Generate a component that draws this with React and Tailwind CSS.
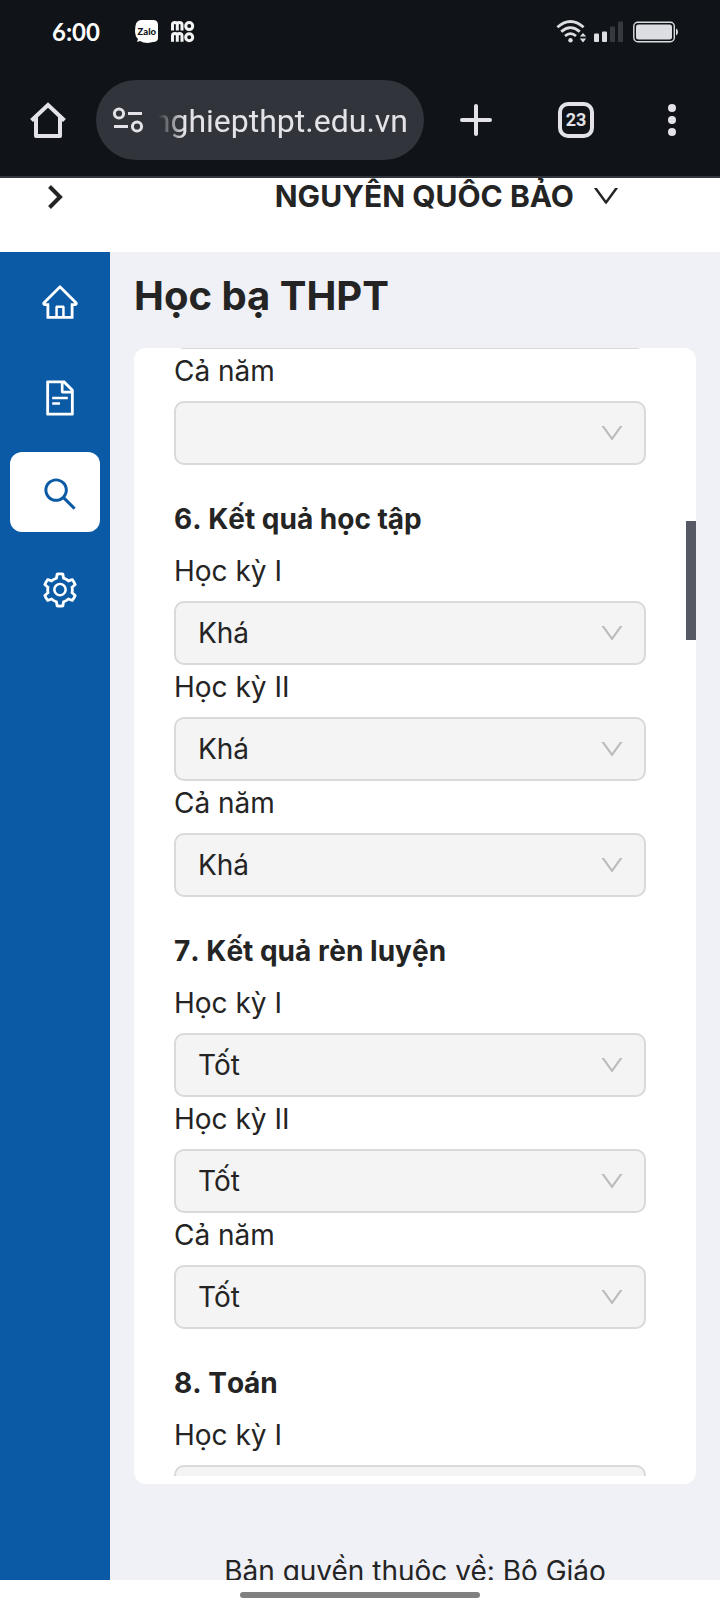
import React from "react";
import {
  AiOutlineDown,
  AiOutlineFileText,
  AiOutlineHome,
  AiOutlineSearch,
  AiOutlineSetting,
} from "react-icons/ai";

const sections = [
  { title: "6. Kết quả học tập", value: "Khá", terms: ["Học kỳ I", "Học kỳ II", "Cả năm"] },
  { title: "7. Kết quả rèn luyện", value: "Tốt", terms: ["Học kỳ I", "Học kỳ II", "Cả năm"] },
  { title: "8. Toán", value: "", terms: ["Học kỳ I"] },
];

const navItems = [
  { label: "Trang chủ", Icon: AiOutlineHome },
  { label: "Phiếu đăng ký", Icon: AiOutlineFileText },
  { label: "Tra cứu", Icon: AiOutlineSearch, active: true },
  { label: "Cài đặt", Icon: AiOutlineSetting },
];

function StatusBar() {
  return (
    <div className="flex h-16 items-center justify-between pl-[52px] pr-10">
      <div className="flex items-center">
        <span className="w-[83px] font-['Lato'] text-2xl leading-8 font-bold text-white">6:00</span>
        <svg className="h-6 w-6" viewBox="0 0 24 24" role="img" aria-label="Zalo">
          <path d="M6 0H18Q23 0 23 5V18Q23 22 18 22L13 23Q8 23 5 21L2 22L3 19Q0 16 0 11Q0 0 6 0Z" fill="#fff" />
          <text x="11.8" y="14.5" textAnchor="middle" fontFamily="Lato, sans-serif" fontWeight="900" fontSize="9.5" fill="#101418">Zalo</text>
        </svg>
        <svg className="ml-3 h-6 w-6" viewBox="0 0 24 24" fill="none" stroke="#f3f3f3" strokeWidth="3" strokeLinecap="butt" role="img" aria-label="MoMo">
          <path d="M1.5 10.6V4.6Q1.5 2.4 3.9 2.4T6.3 4.6V10.6M6.3 4.6Q6.3 2.4 8.6 2.4T11 4.6V10.6" />
          <circle cx="18.2" cy="6.1" r="3.5" />
          <path d="M1.5 21.8V15.8Q1.5 13.6 3.9 13.6T6.3 15.8V21.8M6.3 15.8Q6.3 13.6 8.6 13.6T11 15.8V21.8" />
          <circle cx="18.2" cy="17.3" r="3.5" />
        </svg>
      </div>
      <div className="flex items-center gap-1.5">
        <svg className="h-6 w-8" viewBox="0 0 32 24" fill="none" role="img" aria-label="Wi-Fi">
          <g stroke="#dddee1" strokeWidth="2.8">
            <path d="M1.4 7.2Q14.5 -4.2 27.6 7.2" />
            <path d="M5.2 11.6Q14.5 3.6 23.8 11.6" />
            <path d="M9 16Q14.5 11.2 20 16" />
          </g>
          <circle cx="14.5" cy="20.2" r="2.2" fill="#dddee1" />
          <path d="M23.8 16.5L27 13L30.2 16.5ZM23.8 18.5L27 22.5L30.2 18.5Z" fill="#dddee1" />
        </svg>
        <svg className="h-6 w-8" viewBox="0 0 32 24" role="img" aria-label="Tín hiệu">
          <rect x="0" y="13.5" width="5" height="8.5" rx="1" fill="#dddee1" />
          <rect x="8" y="11.5" width="5" height="10.5" rx="1" fill="#dddee1" />
          <rect x="16" y="6.5" width="5" height="15.5" rx="1" fill="#36393d" />
          <rect x="24" y="1.5" width="5" height="20.5" rx="1" fill="#36393d" />
        </svg>
        <svg className="h-6 w-12" viewBox="0 0 48 24" role="img" aria-label="Pin">
          <rect x="1.8" y="2.3" width="40.5" height="19.5" rx="4" fill="none" stroke="#dddee1" strokeWidth="1.4" />
          <rect x="4" y="4.5" width="36" height="15" rx="2.5" fill="#dddee1" />
          <path d="M44 8.5Q46 9 46 12T44 15.5Z" fill="#dddee1" />
        </svg>
      </div>
    </div>
  );
}

function BrowserBar() {
  return (
    <div className="flex h-28 items-center">
      <button type="button" aria-label="Trang chính" className="flex w-24 justify-center">
        <svg className="h-10 w-10" viewBox="0 0 40 40" fill="none" stroke="#e3e2e8" strokeWidth="4" strokeLinejoin="round">
          <path d="M3.5 20.5L20 5L36.5 20.5" strokeLinejoin="miter" />
          <path d="M8 17V36H32V17" />
        </svg>
      </button>
      <div className="flex h-20 min-w-0 flex-1 items-center rounded-full bg-[#31343b] px-4">
        <svg className="h-8 w-8 shrink-0" viewBox="0 0 32 32" fill="none" stroke="#e3e2e8" strokeWidth="3" aria-hidden="true">
          <circle cx="7" cy="9.5" r="4.6" />
          <path d="M16 9.5H30" />
          <circle cx="25" cy="22.5" r="4.6" />
          <path d="M2 22.5H16" />
        </svg>
        <input
          type="text"
          readOnly
          aria-label="Địa chỉ trang"
          value="nghiepthpt.edu.vn"
          className="ml-2 min-w-0 flex-1 bg-transparent pt-0.5 text-right font-['Roboto'] text-[32px] leading-10 text-[#e3e2e8] outline-none [mask-image:linear-gradient(to_right,transparent_6px,black_32px)]"
        />
      </div>
      <button type="button" aria-label="Thẻ mới" className="flex w-[104px] justify-center">
        <svg className="h-8 w-8" viewBox="0 0 32 32" stroke="#e3e2e8" strokeWidth="4" strokeLinecap="round">
          <path d="M16 2V30M2 16H30" />
        </svg>
      </button>
      <button type="button" aria-label="23 thẻ đang mở" className="flex w-24 justify-center">
        <span className="flex h-9 w-9 items-center justify-center rounded-[10px] border-4 border-[#e3e2e8] font-['Roboto'] text-lg font-bold text-[#e3e2e8]">
          23
        </span>
      </button>
      <button type="button" aria-label="Trình đơn" className="flex w-24 justify-center">
        <svg className="h-8 w-8" viewBox="0 0 32 32" fill="#e3e2e8">
          <circle cx="16" cy="4" r="4" />
          <circle cx="16" cy="16" r="4" />
          <circle cx="16" cy="28" r="4" />
        </svg>
      </button>
    </div>
  );
}

function SelectField({ id, label, value }) {
  return (
    <div>
      {label && (
        <label htmlFor={id} className="mb-2 block leading-11">
          {label}
        </label>
      )}
      <div className="relative">
        <select
          id={id}
          disabled
          aria-label={label ? undefined : "Học kỳ II"}
          defaultValue={value}
          className="block h-16 w-full appearance-none rounded-[10px] border-2 border-[#d9d9d9] bg-[#f4f4f4] pl-[22px] pr-16 text-[#242424] opacity-100"
        >
          <option value={value}>{value}</option>
        </select>
        <AiOutlineDown aria-hidden="true" className="pointer-events-none absolute top-[18px] right-5 h-7 w-7 text-[#bcbcbc]" />
      </div>
    </div>
  );
}

function ScoreCard() {
  return (
    <section className="relative min-h-0 flex-1 overflow-hidden rounded-xl bg-white pb-2">
      <div className="h-full overflow-hidden pl-10 pr-[50px]">
        <div className="-mt-[63px]">
          <SelectField id="prev-term" value="" />
          <SelectField id="prev-year" label="Cả năm" value="" />
        </div>
        {sections.map((section, s) => (
          <div key={section.title} className="pt-8">
            <h2 className="mb-2 leading-11 font-bold [font-kerning:none]">{section.title}</h2>
            {section.terms.map((term, t) => (
              <SelectField key={term} id={`section-${s}-${t}`} label={term} value={section.value} />
            ))}
          </div>
        ))}
      </div>
      <div className="absolute top-[173px] right-0 h-[119px] w-2.5 bg-[#545963]" />
    </section>
  );
}

export default function App() {
  return (
    <div className="flex h-screen flex-col overflow-hidden bg-white font-['Inter',sans-serif] text-[28px] text-[#242424]">
      <div className="shrink-0 border-b-2 border-[#32353b] bg-[#101418]">
        <StatusBar />
        <BrowserBar />
      </div>

      <header className="flex h-[74px] shrink-0 items-start justify-between overflow-hidden bg-white pl-10 pr-[98px]">
        <button type="button" aria-label="Mở trình đơn" className="flex h-9 items-center">
          <svg className="h-8 w-8" viewBox="0 0 32 32" fill="none" stroke="#242424" strokeWidth="4">
            <path d="M9.5 6.5L20 17L9.5 27.5" />
          </svg>
        </button>
        <button type="button" className="flex h-9 items-center gap-4 text-[30px] leading-9 font-bold">
          NGUYỄN QUỐC BẢO
          <AiOutlineDown aria-hidden="true" className="h-8 w-8" />
        </button>
      </header>

      <div className="flex min-h-0 flex-1">
        <nav aria-label="Chính" className="flex w-[110px] shrink-0 flex-col gap-4 bg-[#0a5aa5] px-2.5 py-2">
          {navItems.map(({ label, Icon, active }) => (
            <a
              key={label}
              href="#"
              aria-label={label}
              className={
                active
                  ? "flex h-20 items-center rounded-xl bg-white pt-1 pl-[30px] text-[#0a5aa5]"
                  : "flex h-20 items-center rounded-xl pt-1 pl-[30px] text-white"
              }
            >
              <Icon className="h-10 w-10" />
            </a>
          ))}
        </nav>

        <main className="flex min-w-0 flex-1 flex-col bg-[#f0f1f6] px-6 pt-5">
          <h1 className="mb-7 text-[40px] leading-12 font-bold">Học bạ THPT</h1>
          <ScoreCard />
          <footer className="h-24 shrink-0 overflow-hidden pt-[65px] text-center leading-11">
            Bản quyền thuộc về: Bộ Giáo
          </footer>
        </main>
      </div>

      <div className="flex h-8 shrink-0 items-start justify-center bg-white pt-3">
        <div className="h-1.5 w-1/3 rounded-full bg-[#808080]" />
      </div>
    </div>
  );
}
